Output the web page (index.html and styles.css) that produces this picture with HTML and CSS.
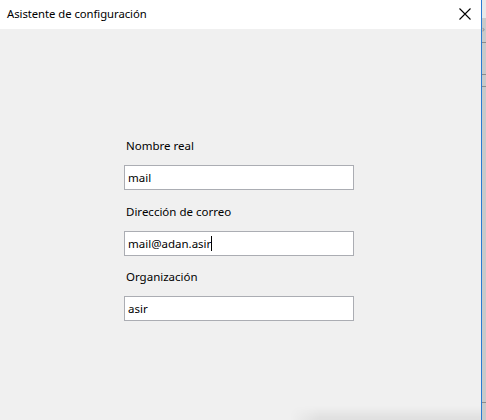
FILE: index.html
```html
<!DOCTYPE html>
<html lang="es">
<head>
<meta charset="utf-8">
<title>Asistente de configuración</title>
<link rel="stylesheet" href="styles.css">
</head>
<body>
<div class="screen">
  <div class="window">
    <div class="titlebar">
      <span class="title">Asistente de configuración</span>
      <span class="close" aria-label="Cerrar">
        <svg width="12" height="12" viewBox="0 0 12 12"><path d="M0.5 0.5 L11.5 11.5 M11.5 0.5 L0.5 11.5" stroke="#000" stroke-width="1.1" fill="none"/></svg>
      </span>
    </div>
    <div class="content">
      <form class="form">
        <label class="label">Nombre real</label>
        <div class="input first"><span>mail</span></div>
        <label class="label">Dirección de correo</label>
        <div class="input"><span>mail@adan.asir</span><span class="caret"></span></div>
        <label class="label">Organización</label>
        <div class="input"><span>asir</span></div>
      </form>
      <div class="shadow"></div>
    </div>
  </div>
  <div class="edge">
    <div class="edge-top"><span class="chev">›</span></div>
    <div class="edge-line l1"></div>
    <div class="edge-line l2"></div>
    <div class="edge-line l3"></div>
    <div class="edge-line l4"></div>
  </div>
</div>
</body>
</html>
```

FILE: styles.css
```css
html, body {
  margin: 0;
  padding: 0;
  background: #f0f0f0;
}
body {
  font-family: "Noto Sans", "Open Sans", "DejaVu Sans", sans-serif;
  font-size: 11.5px;
  color: #000;
}
.screen {
  width: 486px;
  height: 420px;
  display: flex;
  overflow: hidden;
}
.window {
  width: 481px;
  height: 420px;
  display: flex;
  flex-direction: column;
  background: #f0f0f0;
  border-right: 1px solid #2a7ad2;
}
.titlebar {
  height: 29px;
  background: #fff;
  display: flex;
  align-items: center;
  justify-content: space-between;
  padding-left: 7px;
  padding-right: 10px;
  flex-shrink: 0;
}
.title {
  font-size: 11.3px;
  letter-spacing: -0.05px;
  margin-top: -2px;
}
.close {
  display: flex;
  width: 12px;
  height: 12px;
  margin-top: -1px;
}
.content {
  flex: 1;
  position: relative;
}
.form {
  margin: 0;
  padding-top: 108px;
  padding-left: 124px;
  display: flex;
  flex-direction: column;
}
.label {
  display: block;
  padding-left: 2px;
  height: 17px;
  line-height: 17px;
  margin-bottom: 11px;
}
.input {
  height: 23px;
  border: 1px solid #abadb3;
  background: #fff;
  display: flex;
  align-items: center;
  padding-left: 3px;
  box-sizing: content-box;
  margin-bottom: 12px;
  width: 225px;
}
.input.first {
  margin-bottom: 13px;
}
.input span {
  line-height: 17px;
}
.caret {
  display: inline-block;
  width: 1px;
  height: 15px;
  background: #000;
}
.shadow {
  position: absolute;
  left: 290px;
  right: 0;
  bottom: 0;
  height: 14px;
  background: linear-gradient(to bottom, rgba(0,0,0,0) 0%, rgba(0,0,0,0.07) 100%);
  -webkit-mask-image: linear-gradient(to right, transparent 0, #000 30px);
  mask-image: linear-gradient(to right, transparent 0, #000 30px);
}
.edge {
  flex: 1;
  background: #c9c9c9;
  position: relative;
}
.edge-top {
  height: 18px;
  background: #e8e8e8;
}
.chev {
  position: absolute;
  top: 22px;
  left: 0;
  font-size: 9px;
  color: #888;
}
.edge-line {
  position: absolute;
  left: 0;
  right: 0;
  height: 1px;
  background: #8c8c8c;
}
.l1 { top: 42px; }
.l2 { top: 74px; }
.l3 { top: 86px; }
.l4 { top: 402px; }
```
